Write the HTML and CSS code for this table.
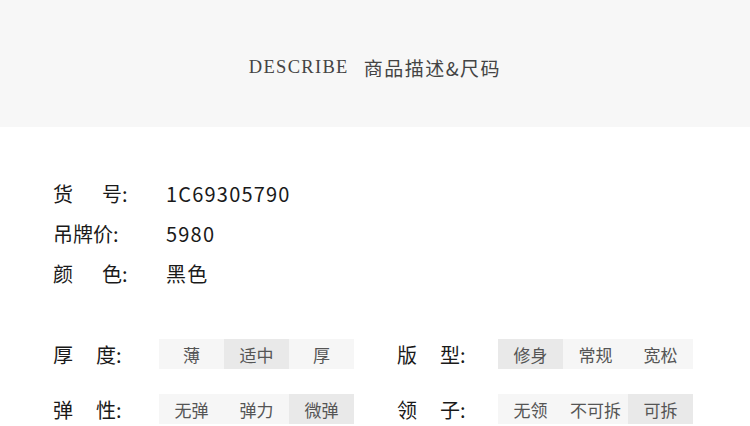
FILE: index.html
```html
<!DOCTYPE html>
<html lang="zh-CN">
<head>
  <meta charset="UTF-8">
  <meta name="viewport" content="width=device-width, initial-scale=1">
  <title>商品描述&amp;尺码</title>
  <link rel="stylesheet" href="styles.css">
</head>
<body>

  <header class="band">
    <h2 class="title"><span class="en">DESCRIBE</span><span class="cn">商品描述&amp;尺码</span></h2>
  </header>

  <section class="info">
    <div class="row"><span class="label"><span class="k">货</span>号:</span><span class="val">1C69305790</span></div>
    <div class="row"><span class="label">吊牌价:</span><span class="val">5980</span></div>
    <div class="row"><span class="label"><span class="k">颜</span>色:</span><span class="val">黑色</span></div>
  </section>

  <section class="specs">
    <div class="spec">
      <span class="label"><span class="k2">厚</span>度:</span>
      <div class="tags"><span>薄</span><span class="on">适中</span><span>厚</span></div>
    </div>
    <div class="spec">
      <span class="label"><span class="k2">版</span>型:</span>
      <div class="tags"><span class="on">修身</span><span>常规</span><span>宽松</span></div>
    </div>
    <div class="spec">
      <span class="label"><span class="k2">弹</span>性:</span>
      <div class="tags"><span>无弹</span><span>弹力</span><span class="on">微弹</span></div>
    </div>
    <div class="spec">
      <span class="label"><span class="k2">领</span>子:</span>
      <div class="tags"><span>无领</span><span>不可拆</span><span class="on">可拆</span></div>
    </div>
  </section>

</body>
</html>
```

FILE: styles.css
```css
body {
  margin: 0;
  background: #fff;
  color: #1a1a1a;
  font-family: "Noto Sans CJK SC", "Noto Sans", sans-serif;
}

.band {
  height: 127px;
  background: #f7f7f7;
  display: flex;
  align-items: center;
  justify-content: center;
}

.title {
  margin: 0;
  font-weight: normal;
  font-size: 18px;
  color: #444;
  display: flex;
  align-items: center;
  gap: 15px;
  padding-top: 8px;
}

.title .en {
  font-family: "Liberation Serif", serif;
  font-size: 18.5px;
  letter-spacing: 1.3px;
}

.title .cn {
  font-size: 19px;
  letter-spacing: 1.5px;
}

.info {
  padding: 46px 0 0 53px;
}

.row {
  display: flex;
  height: 40px;
  align-items: center;
  font-size: 20px;
}

.row .label {
  width: 113px;
}

.k {
  display: inline-block;
  width: 49px;
}

.val {
  letter-spacing: 1.2px;
}

.specs {
  padding: 46px 0 0 53px;
  display: grid;
  grid-template-columns: 344px 300px;
  row-gap: 25px;
}

.spec {
  display: flex;
  align-items: center;
  font-size: 20px;
}

.spec .label {
  width: 106px;
}

.k2 {
  display: inline-block;
  width: 43px;
}

.spec:nth-child(even) .label {
  width: 101px;
}

.tags {
  display: flex;
}

.tags span {
  width: 65px;
  height: 30px;
  display: flex;
  align-items: center;
  justify-content: center;
  background: #f6f6f6;
  color: #555;
  font-size: 17px;
}

.tags span.on {
  background: #e9e9e9;
}
```
